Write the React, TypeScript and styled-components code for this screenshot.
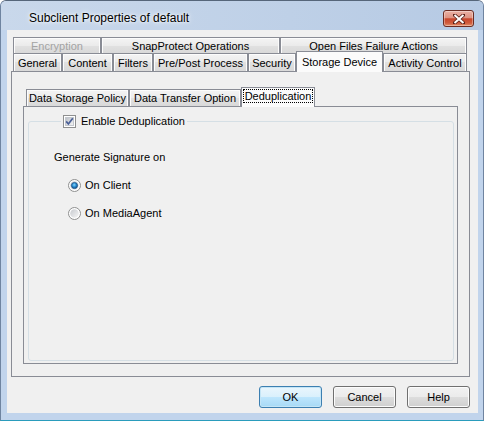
import React from 'react'
import styled, { createGlobalStyle, css } from 'styled-components'

const GlobalStyle = createGlobalStyle`
  html, body {
    margin: 0;
    padding: 0;
    background: #fff;
  }
  body {
    font-family: "Liberation Sans", Arial, sans-serif;
    font-size: 11px;
    color: #000;
  }
`

interface TabDef {
  label: string
  width: number
  active?: boolean
  disabled?: boolean
  focused?: boolean
}

const backRow: TabDef[] = [
  { label: 'Encryption', width: 88, disabled: true },
  { label: 'SnapProtect Operations', width: 179 },
  { label: 'Open Files Failure Actions', width: 187 }
]

const frontRow: TabDef[] = [
  { label: 'General', width: 49 },
  { label: 'Content', width: 51 },
  { label: 'Filters', width: 40 },
  { label: 'Pre/Post Process', width: 95 },
  { label: 'Security', width: 48 },
  { label: 'Storage Device', width: 87, active: true },
  { label: 'Activity Control', width: 84 }
]

const innerRow: TabDef[] = [
  { label: 'Data Storage Policy', width: 103 },
  { label: 'Data Transfer Option', width: 112 },
  { label: 'Deduplication', width: 74, active: true, focused: true }
]

const CheckBox = () => {
  const id = React.useId()
  return (
    <svg width="13" height="13" viewBox="0 0 13 13">
      <defs>
        <linearGradient id={id} x1="0" y1="0" x2="1" y2="1">
          <stop offset="0" stopColor="#b9bec5" />
          <stop offset="1" stopColor="#f7f7f7" />
        </linearGradient>
      </defs>
      <rect x="0.5" y="0.5" width="12" height="12" fill="#fff" stroke="#8e8f8f" />
      <rect x="2.5" y="2.5" width="8" height="8" fill={`url(#${id})`} stroke="#c3c7cd" />
      <path d="M3.2 6.4 L5.4 9 L9.8 3.2" fill="none" stroke="#4a5f97" strokeWidth="1.7" />
    </svg>
  )
}

const Radio = ({ checked }: { checked?: boolean }) => {
  const id = React.useId()
  return (
    <svg width="13" height="13" viewBox="0 0 13 13">
      <defs>
        <linearGradient id={id + 'r'} x1="0" y1="0" x2="1" y2="1">
          <stop offset="0" stopColor="#c6c9ce" />
          <stop offset="1" stopColor="#f7f7f7" />
        </linearGradient>
        <radialGradient id={id + 'd'} cx="0.45" cy="0.4" r="0.6">
          <stop offset="0" stopColor="#8ad7fb" />
          <stop offset="0.5" stopColor="#2b8fd4" />
          <stop offset="1" stopColor="#0f4f8a" />
        </radialGradient>
      </defs>
      <circle cx="6.5" cy="6.5" r="6" fill="#fff" stroke="#8e8f8f" />
      <circle cx="6.5" cy="6.5" r="4.3" fill={`url(#${id}r)`} />
      {checked && (
        <circle cx="6.5" cy="6.5" r="3.1" fill={`url(#${id}d)`} stroke="#1b4f82" strokeWidth="0.7" />
      )}
    </svg>
  )
}

const CloseGlyph = () => (
  <svg width="12" height="10" viewBox="0 0 12 10">
    <path
      d="M1.5 1 L10.5 9 M10.5 1 L1.5 9"
      stroke="#5a2118"
      strokeWidth="3.6"
      strokeLinecap="square"
    />
    <path d="M1.5 1 L10.5 9 M10.5 1 L1.5 9" stroke="#fff" strokeWidth="2" />
  </svg>
)

const renderTab = (tab: TabDef, height: number) => (
  <Tab
    key={tab.label}
    $w={tab.width}
    $h={height}
    $active={tab.active}
    $disabled={tab.disabled}
  >
    {tab.focused ? <FocusRect>{tab.label}</FocusRect> : tab.label}
  </Tab>
)

export default function App() {
  return (
    <>
      <GlobalStyle />
      <Window>
        <TitleBar>
          <Title>Subclient Properties of default</Title>
          <CloseButton>
            <CloseGlyph />
          </CloseButton>
        </TitleBar>

        <Client>
          <TabStrip>
            <TabRow $h={16}>{backRow.map(t => renderTab(t, 16))}</TabRow>
            <TabRow $h={18}>{frontRow.map(t => renderTab(t, 18))}</TabRow>
          </TabStrip>

          <OuterPanel>
            <InnerStrip>{innerRow.map(t => renderTab(t, 17))}</InnerStrip>
            <InnerPanel>
              <GroupBox>
                <Legend>
                  <CheckBox />
                  <span>Enable Deduplication</span>
                </Legend>
                <Caption>Generate Signature on</Caption>
                <RadioList>
                  <RadioRow>
                    <Radio checked />
                    <span>On Client</span>
                  </RadioRow>
                  <RadioRow>
                    <Radio />
                    <span>On MediaAgent</span>
                  </RadioRow>
                </RadioList>
              </GroupBox>
            </InnerPanel>
          </OuterPanel>

          <ButtonBar>
            <Button $default>OK</Button>
            <Button>Cancel</Button>
            <Button>Help</Button>
          </ButtonBar>
        </Client>
      </Window>
    </>
  )
}

const Window = styled.div`
  box-sizing: border-box;
  width: 484px;
  height: 421px;
  display: flex;
  flex-direction: column;
  border: 1px solid #6f84a0;
  border-top-color: #56667a;
  border-bottom-color: #2a9cbc;
  border-radius: 6px 6px 0 0;
  background: #c1d4ec;
`

const TitleBar = styled.div`
  height: 29px;
  flex: none;
  display: flex;
  align-items: flex-start;
  padding-left: 28px;
  border-radius: 5px 5px 0 0;
  background: linear-gradient(to right, #c9d8eb, #bed0e7 60%, #b6cae4);
`

const Title = styled.div`
  flex: 1;
  padding-top: 10px;
  font-size: 12px;
  line-height: 14px;
  color: #000;
  text-shadow: 0 0 6px #fff, 0 0 3px #fff;
`

const CloseButton = styled.div`
  box-sizing: border-box;
  width: 31px;
  height: 17px;
  margin: 9px 9px 0 0;
  display: flex;
  align-items: center;
  justify-content: center;
  border: 1px solid #6b2c22;
  border-radius: 3px;
  background: linear-gradient(#eab1a5 0%, #de9382 45%, #c8462c 52%, #cf5b3c 80%, #e4906b 100%);
  box-shadow: inset 0 0 0 1px rgba(255, 255, 255, 0.35);
`

const Client = styled.div`
  flex: 1;
  margin: 0 5px 7px 6px;
  padding: 7px 8px 5px 4px;
  display: flex;
  flex-direction: column;
  background: #f0f0f0;
`

const TabStrip = styled.div`
  display: flex;
  flex-direction: column;
  padding-left: 2px;
`

const TabRow = styled.div<{ $h: number }>`
  height: ${p => p.$h}px;
  display: flex;
  align-items: flex-end;
`

const InnerStrip = styled.div`
  height: 17px;
  display: flex;
  align-items: flex-end;
  padding-left: 3px;
`

const Tab = styled.div<{ $w: number; $h: number; $active?: boolean; $disabled?: boolean }>`
  box-sizing: border-box;
  flex: none;
  width: ${p => p.$w}px;
  height: ${p => p.$h}px;
  display: flex;
  align-items: center;
  justify-content: center;
  white-space: nowrap;
  border: 1px solid #898c95;
  border-bottom: none;
  color: ${p => (p.$disabled ? '#a3a3a3' : '#000')};
  background: linear-gradient(#f4f4f4, #ebebeb 50%, #e1e1e1 50%, #d9d9d9);
  box-shadow: inset 1px 1px 0 #fcfcfc, inset -1px 0 0 #fcfcfc;

  ${p =>
    p.$active &&
    css`
      position: relative;
      z-index: 1;
      height: ${p.$h + 3}px;
      margin-bottom: -1px;
      background: #fbfbfb;
      box-shadow: none;
    `}
`

const FocusRect = styled.span`
  box-sizing: border-box;
  flex: 1;
  align-self: flex-start;
  height: 14px;
  margin: 1px 1px 0;
  display: flex;
  align-items: center;
  justify-content: center;
  border: 1px dotted #000;
`

const OuterPanel = styled.div`
  box-sizing: border-box;
  height: 306px;
  flex: none;
  display: flex;
  flex-direction: column;
  padding: 17px 11px 12px 11px;
  border: 1px solid #898c95;
  background: #f0f0f0;
`

const InnerPanel = styled.div`
  flex: 1;
  display: flex;
  flex-direction: column;
  padding: 8px 3px 2px 4px;
  border: 1px solid #898c95;
  background: #f0f0f0;
`

const GroupBox = styled.fieldset`
  flex: 1;
  min-width: 0;
  margin: 0;
  padding: 0 0 0 25px;
  border: 1px solid #d5dfe5;
  border-radius: 3px;
`

const Legend = styled.legend`
  margin-left: 7px;
  padding: 0 2px;
  display: flex;
  align-items: center;
  gap: 5px;
  line-height: 13px;
`

const Caption = styled.div`
  margin-top: 23px;
  line-height: 13px;
`

const RadioList = styled.div`
  margin-top: 15px;
  padding-left: 14px;
  display: flex;
  flex-direction: column;
  gap: 15px;
`

const RadioRow = styled.div`
  display: flex;
  align-items: center;
  gap: 4px;
  line-height: 13px;
`

const ButtonBar = styled.div`
  margin-top: 9px;
  display: flex;
  justify-content: flex-end;
  gap: 11px;
`

const Button = styled.div<{ $default?: boolean }>`
  box-sizing: border-box;
  width: 63px;
  height: 22px;
  display: flex;
  align-items: center;
  justify-content: center;
  border: 1px solid ${p => (p.$default ? '#3c7fb1' : '#707070')};
  border-radius: 3px;
  background: ${p =>
    p.$default
      ? 'linear-gradient(#eaf6fd, #d9f0fc 50%, #bee6fd 50%, #a7d9f5)'
      : 'linear-gradient(#f2f2f2, #ebebeb 50%, #dddddd 50%, #cfcfcf)'};
  box-shadow: inset 0 0 0 1px ${p => (p.$default ? '#c4e5f6' : '#fcfcfc')};
`
